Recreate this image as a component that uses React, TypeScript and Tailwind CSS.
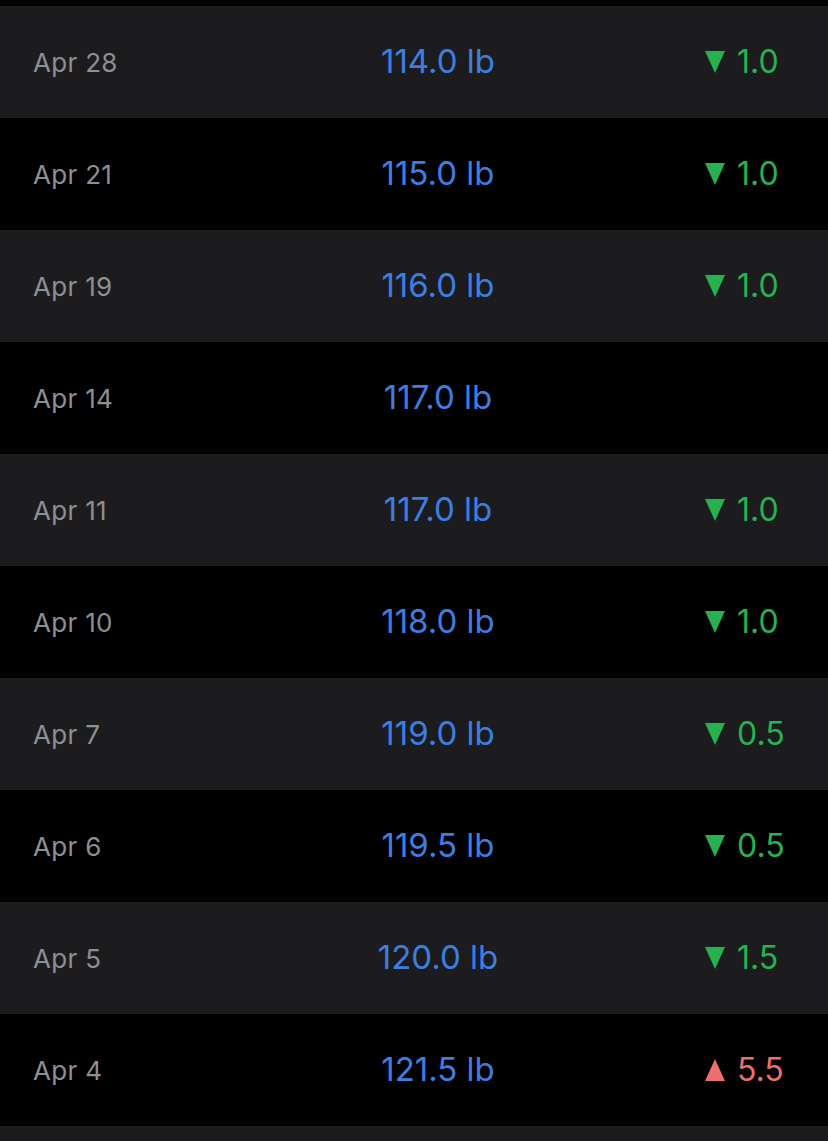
import React from "react";

type Row = { date: string; weight: string; change?: { dir: "down" | "up"; value: string } };

const rows: Row[] = [
  { date: "Apr 28", weight: "114.0 lb", change: { dir: "down", value: "1.0" } },
  { date: "Apr 21", weight: "115.0 lb", change: { dir: "down", value: "1.0" } },
  { date: "Apr 19", weight: "116.0 lb", change: { dir: "down", value: "1.0" } },
  { date: "Apr 14", weight: "117.0 lb" },
  { date: "Apr 11", weight: "117.0 lb", change: { dir: "down", value: "1.0" } },
  { date: "Apr 10", weight: "118.0 lb", change: { dir: "down", value: "1.0" } },
  { date: "Apr 7", weight: "119.0 lb", change: { dir: "down", value: "0.5" } },
  { date: "Apr 6", weight: "119.5 lb", change: { dir: "down", value: "0.5" } },
  { date: "Apr 5", weight: "120.0 lb", change: { dir: "down", value: "1.5" } },
  { date: "Apr 4", weight: "121.5 lb", change: { dir: "up", value: "5.5" } },
];

function Tri({ dir }: { dir: "down" | "up" }) {
  return dir === "down" ? (
    <svg width="20" height="22" viewBox="0 0 20 22" className="shrink-0">
      <polygon points="0,0 20,0 10,22" fill="#25b24f" />
    </svg>
  ) : (
    <svg width="20" height="22" viewBox="0 0 20 22" className="shrink-0">
      <polygon points="10,0 20,22 0,22" fill="#ee6d6d" />
    </svg>
  );
}

export default function App() {
  return (
    <div
      className="w-[828px] h-[1141px] overflow-hidden bg-black pt-[6px]"
      style={{ fontFamily: "Inter, 'Open Sans', sans-serif" }}
    >
      {rows.map((r, i) => (
        <div
          key={i}
          className={`grid grid-cols-[138px_534px_1fr] items-center h-[112px] pl-[33px] ${
            i % 2 === 0 ? "bg-[#1c1c1e]" : "bg-black"
          }`}
        >
          <div className="text-[26px] text-[#8e8e93] tracking-[0.3px]">{r.date}</div>
          <div className="text-center text-[33px] text-[#3b7fe2]">{r.weight}</div>
          <div>
            {r.change && (
              <div className="flex items-center gap-[12px]">
                <Tri dir={r.change.dir} />
                <span
                  className={`text-[32px] ${
                    r.change.dir === "down" ? "text-[#25b24f]" : "text-[#ee6d6d]"
                  }`}
                >
                  {r.change.value}
                </span>
              </div>
            )}
          </div>
        </div>
      ))}
      <div className="h-[20px] bg-[#1c1c1e]" />
    </div>
  );
}
